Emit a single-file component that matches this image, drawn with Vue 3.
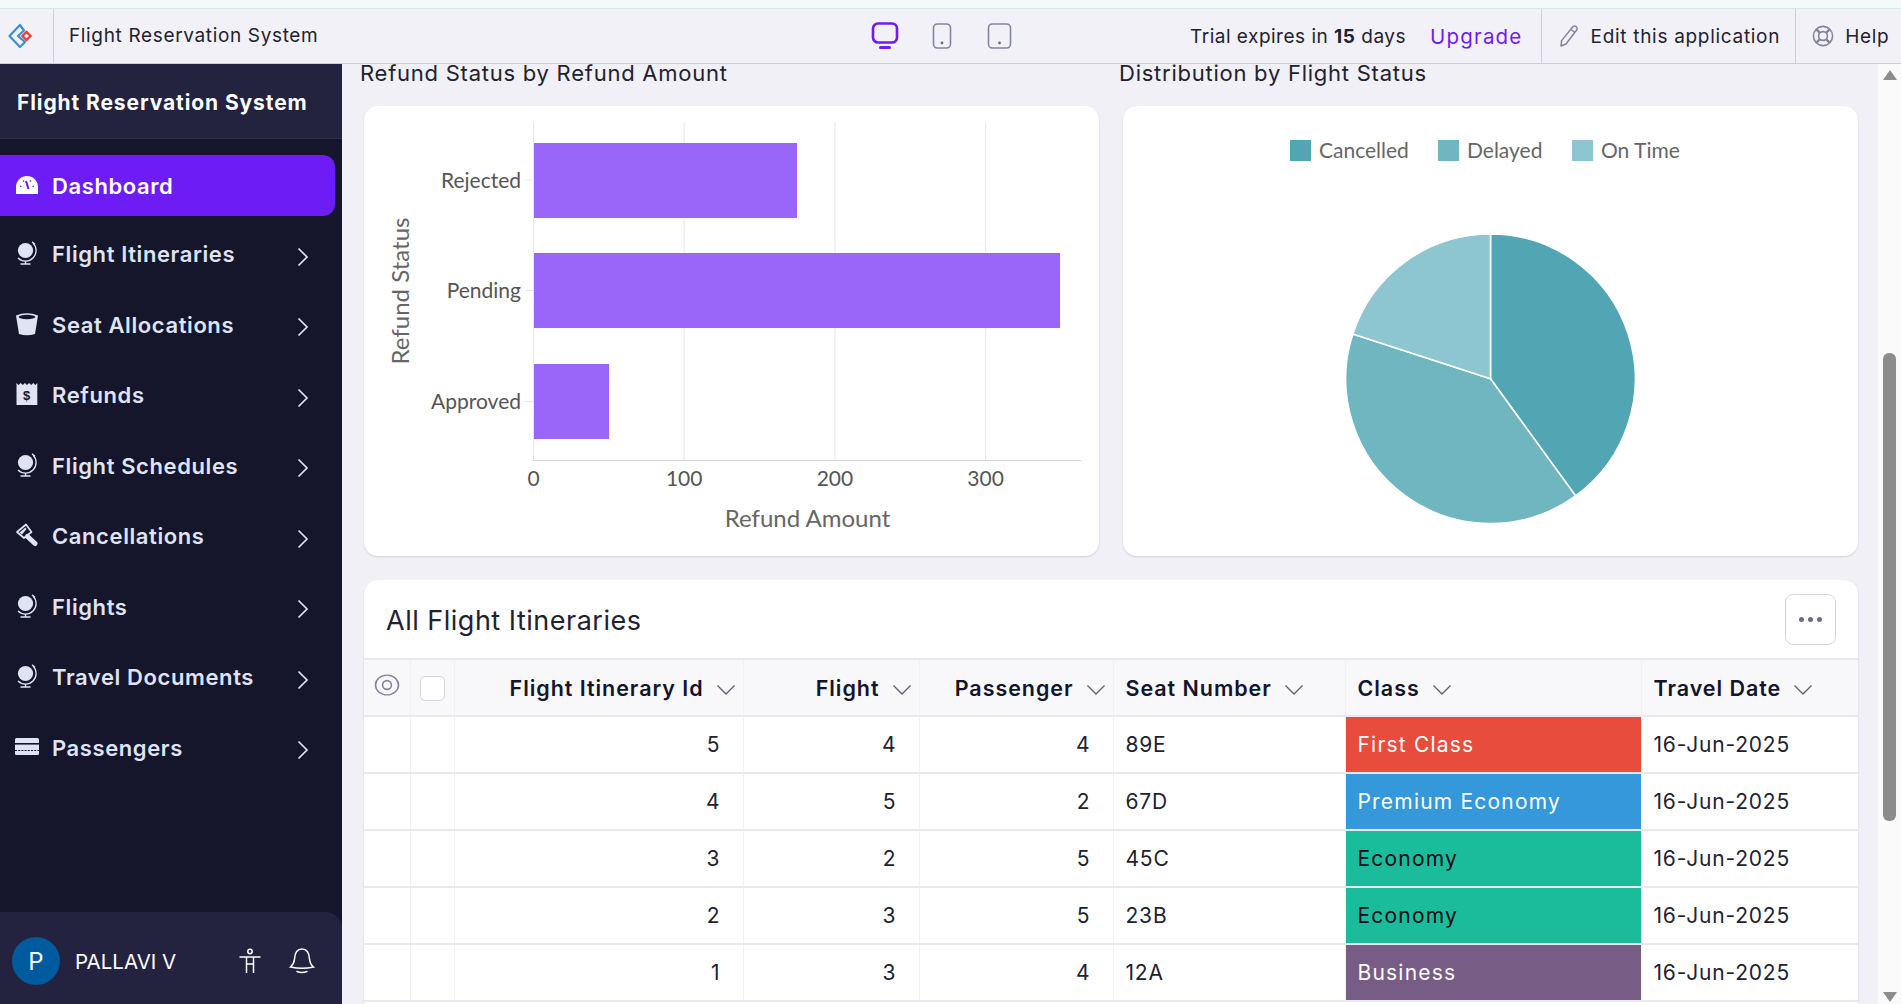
<template>
  <div class="page">
    <div class="strip"></div>

    <header class="topbar">
      <div class="logo">
        <svg width="30" height="30" viewBox="0 0 30 30">
          <path d="M17 4 L6.5 15 L17 26 L22 21 L15 15 L21 9.5 Z" fill="none" stroke="#3d8ed0" stroke-width="2.2" stroke-linejoin="round" />
          <path d="M27.5 15 L23.5 19 L19.5 15 L23.5 11 Z" fill="none" stroke="#e8403c" stroke-width="2.4" />
        </svg>
      </div>
      <div class="app-name">Flight Reservation System</div>
      <div class="devices">
        <svg width="28" height="28" viewBox="0 0 28 28">
          <rect x="2" y="1.5" width="24" height="19" rx="5" fill="none" stroke="#6d1cf5" stroke-width="2.6" />
          <rect x="8" y="24" width="12" height="3" rx="1.5" fill="#6d1cf5" />
        </svg>
        <svg width="20" height="28" viewBox="0 0 20 28">
          <rect x="1.5" y="2" width="17" height="24" rx="4" fill="none" stroke="#84849f" stroke-width="1.6" />
          <circle cx="10" cy="21" r="1.4" fill="#6c6c88" />
        </svg>
        <svg class="device-last" width="25" height="28" viewBox="0 0 25 28">
          <rect x="1.5" y="2" width="22" height="24" rx="4" fill="none" stroke="#84849f" stroke-width="1.6" />
          <circle cx="12.5" cy="21" r="1.4" fill="#6c6c88" />
        </svg>
      </div>
      <div class="trial">Trial expires in <b>15</b> days</div>
      <a class="upgrade">Upgrade</a>
      <div class="top-action edit">
        <svg width="20" height="24" viewBox="0 0 20 24">
          <path d="M14 2.5 a2.6 2.6 0 0 1 4 3 L7 20 L2 22 L2.6 16.6 Z M12 5.5 L16 8.5" fill="none" stroke="#84849f" stroke-width="1.5" stroke-linejoin="round" />
        </svg>
        <span>Edit this application</span>
      </div>
      <div class="top-action help">
        <svg width="22" height="22" viewBox="0 0 22 22">
          <g fill="none" stroke="#84849f" stroke-width="1.6">
            <circle cx="11" cy="11" r="9.6" />
            <circle cx="11" cy="11" r="4.4" />
            <path d="M4.2 4.2 L7.9 7.9 M17.8 4.2 L14.1 7.9 M4.2 17.8 L7.9 14.1 M17.8 17.8 L14.1 14.1" stroke-width="2.4" />
          </g>
        </svg>
        <span>Help</span>
      </div>
    </header>

    <div class="body-row">
      <aside class="sidebar">
        <div class="side-title">Flight Reservation System</div>
        <nav class="nav">
          <div class="nav-active">
            <svg class="nav-icon" viewBox="0 0 24 24">
              <path d="M1 21 V14 A11 11 0 0 1 23 14 V21 Z" fill="#fff" />
              <path d="M11 8 L13.5 16" stroke="#6d1cf5" stroke-width="2" />
              <path d="M5 13 l1.5 .6 M8 7.5 l1 1 M16 7.5 l-1 1 M19 13 l-1.5 .6" stroke="#6d1cf5" stroke-width="1.2" />
            </svg>
            <span>Dashboard</span>
          </div>
          <div v-for="item in navItems" :key="item.label" class="nav-item">
            <svg class="nav-icon" viewBox="0 0 24 24">
              <template v-if="item.icon === 'globe'">
                <circle cx="10.5" cy="9.5" r="7.6" fill="#dfe3f3" />
                <path d="M18 2 A10.6 10.6 0 0 1 3 17 M17 .8 l3 2.4" fill="none" stroke="#dfe3f3" stroke-width="1.3" />
                <path d="M10.5 20 V22.5 M5.5 23 H15.5" stroke="#dfe3f3" stroke-width="1.4" />
              </template>
              <template v-else-if="item.icon === 'bucket'">
                <path d="M1 3.5 Q12 -1 23 3.5 L20 22 Q12 24.5 4 22 Z" fill="#dfe3f3" />
                <ellipse cx="12" cy="5" rx="8.4" ry="2.2" fill="#15162b" />
              </template>
              <template v-else-if="item.icon === 'receipt'">
                <path d="M1.5 1 l2.1 2 l2.1 -2 l2.1 2 l2.1 -2 l2.1 2 l2.1 -2 l2.1 2 l2.1 -2 l2.1 2 l1.9 -2 V23 H1.5 Z" fill="#dfe3f3" />
                <text x="12" y="18" text-anchor="middle" class="dollar">$</text>
              </template>
              <template v-else-if="item.icon === 'hammer'">
                <path d="M12.5 13.5 L20 20.5" stroke="#dfe3f3" stroke-width="5" stroke-linecap="round" />
                <path d="M2 9 L11 1.5 L16.5 9 L9 15 Z" fill="none" stroke="#dfe3f3" stroke-width="1.7" stroke-linejoin="round" />
                <path d="M4.5 9.5 L10.5 4.5 L11.5 6 L7 11.5 Z" fill="#dfe3f3" />
              </template>
              <template v-else>
                <rect x="0" y="3" width="24" height="17" rx="1.5" fill="#dfe3f3" />
                <rect x="0" y="8" width="24" height="1.6" fill="#15162b" />
                <path d="M0 15.5 H24" stroke="#15162b" stroke-width="1.2" stroke-dasharray="2 1.2" />
              </template>
            </svg>
            <span class="nav-label">{{ item.label }}</span>
            <svg class="nav-chevron" width="12" height="20" viewBox="0 0 12 20">
              <path d="M1.5 1.5 L10 10 L1.5 18.5" fill="none" stroke="#dfe3f3" stroke-width="1.7" />
            </svg>
          </div>
        </nav>
        <div class="user">
          <div class="avatar">P</div>
          <div class="user-name">PALLAVI V</div>
          <svg class="person" width="24" height="26" viewBox="0 0 24 26">
            <g fill="none" stroke="#fff" stroke-width="1.5">
              <circle cx="12" cy="3.5" r="2.2" />
              <path d="M1.5 9 H22.5 M8.5 9 V25 M15.5 9 V25 M8.5 16 H15.5" />
            </g>
          </svg>
          <svg width="26" height="26" viewBox="0 0 26 26">
            <g fill="none" stroke="#fff" stroke-width="1.5" stroke-linecap="round">
              <path d="M1.5 19 Q5 16 5.5 11 C6 3 9 1 13 1 C17 1 20 3 20.5 11 Q21 16 24.5 19 Q13 21.5 1.5 19 Z" />
              <path d="M8 23.5 Q13 25.5 18 23.5" />
            </g>
          </svg>
        </div>
      </aside>

      <main class="main">
        <div class="charts">
          <section class="chart-block">
            <h2>Refund Status by Refund Amount</h2>
            <div class="card">
              <svg class="chart" viewBox="364 106 736 450">
                <g stroke="#e6e6e6" stroke-width="1">
                  <line v-for="t in barTicks" :key="t.label" :x1="t.x" :x2="t.x" y1="122" y2="461" />
                  <line x1="525" x2="533" y1="180" y2="180" />
                  <line x1="525" x2="533" y1="290.5" y2="290.5" />
                  <line x1="525" x2="533" y1="401.5" y2="401.5" />
                </g>
                <rect v-for="b in bars" :key="b.label" x="534" :y="b.y" :width="b.value * 1.503" height="75" fill="#9966f9" />
                <line x1="533" x2="1081" y1="460.5" y2="460.5" stroke="#d8d8d8" />
                <text v-for="b in bars" :key="b.label" x="521" :y="b.y + 45" text-anchor="end" class="chart-text">{{ b.label }}</text>
                <text v-for="t in barTicks" :key="t.label" :x="t.x" y="486" text-anchor="middle" class="chart-text">{{ t.label }}</text>
                <text x="807.5" y="527" text-anchor="middle" class="chart-title">Refund Amount</text>
                <text x="409" y="291" text-anchor="middle" transform="rotate(-90 409 291)" class="chart-title">Refund Status</text>
              </svg>
            </div>
          </section>
          <section class="chart-block">
            <h2>Distribution by Flight Status</h2>
            <div class="card">
              <svg class="chart" viewBox="1123 106 736 450">
                <g v-for="s in legend" :key="s.label">
                  <rect :x="s.x" y="140" width="21" height="21" :fill="s.color" />
                  <text :x="s.x + 29" y="158" class="legend-text">{{ s.label }}</text>
                </g>
                <path v-for="s in slices" :key="s.color" :d="s.d" :fill="s.color" stroke="#fff" stroke-width="1.6" />
              </svg>
            </div>
          </section>
        </div>

        <section class="card table-card">
          <div class="table-head">
            <h3>All Flight Itineraries</h3>
            <button class="more"><i></i><i></i><i></i></button>
          </div>
          <table>
            <colgroup>
              <col v-for="w in colWidths" :key="w.key" :style="{ width: w.px + 'px' }" />
            </colgroup>
            <thead>
              <tr>
                <th class="center">
                  <svg width="26" height="26" viewBox="0 0 26 26">
                    <circle cx="13" cy="13" r="11.5" fill="none" stroke="#84849f" stroke-width="1.6" transform="matrix(1 0 0 .86 0 1.8)" />
                    <circle cx="13" cy="13" r="4.4" fill="none" stroke="#84849f" stroke-width="1.6" />
                  </svg>
                </th>
                <th class="center"><span class="checkbox"></span></th>
                <th v-for="c in columns" :key="c.label" :class="c.num ? 'num-head' : 'text-head'">
                  <span class="th-inner">
                    <span class="th-label">{{ c.label }}</span>
                    <svg width="20" height="12" viewBox="0 0 20 12">
                      <path d="M1.5 1.5 L10 10 L18.5 1.5" fill="none" stroke="#5f5f78" stroke-width="1.3" />
                    </svg>
                  </span>
                </th>
              </tr>
            </thead>
            <tbody>
              <tr v-for="r in rows" :key="r.id">
                <td></td>
                <td></td>
                <td class="num">{{ r.id }}</td>
                <td class="num">{{ r.flight }}</td>
                <td class="num">{{ r.passenger }}</td>
                <td class="text">{{ r.seat }}</td>
                <td class="text cls" :class="r.cls"><span>{{ r.label }}</span></td>
                <td class="text">{{ r.date }}</td>
              </tr>
            </tbody>
          </table>
        </section>
      </main>

      <div class="scrollbar">
        <div class="arrow-up"></div>
        <div class="thumb"></div>
        <div class="arrow-down"></div>
      </div>
    </div>
  </div>
</template>

<script setup>
const navItems = [
  { label: 'Flight Itineraries', icon: 'globe' },
  { label: 'Seat Allocations', icon: 'bucket' },
  { label: 'Refunds', icon: 'receipt' },
  { label: 'Flight Schedules', icon: 'globe' },
  { label: 'Cancellations', icon: 'hammer' },
  { label: 'Flights', icon: 'globe' },
  { label: 'Travel Documents', icon: 'globe' },
  { label: 'Passengers', icon: 'card' }
]

const bars = [
  { label: 'Rejected', value: 175, y: 143 },
  { label: 'Pending', value: 350, y: 253 },
  { label: 'Approved', value: 50, y: 364 }
]
const barTicks = [0, 100, 200, 300].map((v) => ({ label: String(v), x: 533.5 + v * 1.507 }))

const legend = [
  { label: 'Cancelled', x: 1290, color: '#52a5b2' },
  { label: 'Delayed', x: 1438, color: '#6fb6c0' },
  { label: 'On Time', x: 1572, color: '#8dc6d0' }
]

// pie slices, angles measured clockwise from the top
const cx = 1490.5
const cy = 378.7
const radius = 144.8
const point = (deg) => {
  const a = (deg * Math.PI) / 180
  return `${cx + radius * Math.sin(a)} ${cy - radius * Math.cos(a)}`
}
const slice = (from, to) => `M${cx} ${cy} L${point(from)} A${radius} ${radius} 0 ${to - from > 180 ? 1 : 0} 1 ${point(to)} Z`
const slices = [
  { d: slice(0, 144), color: '#52a5b2' },
  { d: slice(144, 288), color: '#6fb6c0' },
  { d: slice(288, 360), color: '#8dc6d0' }
]

const colWidths = [46, 44, 289, 176, 194, 232, 296, 217].map((px, key) => ({ px, key }))
const columns = [
  { label: 'Flight Itinerary Id', num: true },
  { label: 'Flight', num: true },
  { label: 'Passenger', num: true },
  { label: 'Seat Number' },
  { label: 'Class' },
  { label: 'Travel Date' }
]
const rows = [
  { id: 5, flight: 4, passenger: 4, seat: '89E', label: 'First Class', cls: 'c-first', date: '16-Jun-2025' },
  { id: 4, flight: 5, passenger: 2, seat: '67D', label: 'Premium Economy', cls: 'c-premium', date: '16-Jun-2025' },
  { id: 3, flight: 2, passenger: 5, seat: '45C', label: 'Economy', cls: 'c-economy', date: '16-Jun-2025' },
  { id: 2, flight: 3, passenger: 5, seat: '23B', label: 'Economy', cls: 'c-economy', date: '16-Jun-2025' },
  { id: 1, flight: 3, passenger: 4, seat: '12A', label: 'Business', cls: 'c-business', date: '16-Jun-2025' }
]
</script>

<style>
html,
body {
  margin: 0;
  height: 100%;
  overflow: hidden;
}
</style>

<style scoped>
.page {
  width: 1901px;
  height: 1004px;
  display: flex;
  flex-direction: column;
  overflow: hidden;
  background: #f0f0f6;
  color: #22222f;
  font-family: Inter, 'Noto Sans', sans-serif;
}

.strip {
  height: 8px;
  background: #f3fbfa;
  border-bottom: 1px solid #d5e8e6;
}

.topbar {
  position: relative;
  z-index: 1;
  height: 54px;
  display: flex;
  align-items: center;
  background: #f2f1f8;
  border-bottom: 1px solid #cdcddd;
  font-size: 19px;
  flex-shrink: 0;
  white-space: nowrap;
}

.logo {
  width: 54px;
  height: 100%;
  display: flex;
  align-items: center;
  padding-left: 3px;
  box-sizing: border-box;
  border-right: 1px solid #cdcddd;
}

.app-name {
  width: 817px;
  padding: 0 0 2px 15px;
  box-sizing: border-box;
  letter-spacing: 0.65px;
}

.devices {
  display: flex;
  align-items: center;
  gap: 33px;
}

.device-last {
  margin-left: 2px;
}

.trial {
  margin-left: 178px;
  letter-spacing: 0.5px;
}

.trial b {
  font-weight: 700;
}

.upgrade {
  margin-left: 24px;
  color: #6d1cf5;
  font-size: 20.5px;
  letter-spacing: 1.2px;
}

.top-action {
  height: 100%;
  display: flex;
  align-items: center;
  gap: 12px;
  box-sizing: border-box;
  border-left: 1px solid #cdcddd;
  letter-spacing: 0.7px;
}

.edit {
  margin-left: 18px;
  padding: 0 15px 0 17px;
}

.help {
  padding-left: 16px;
  gap: 11px;
}

.body-row {
  flex: 1;
  display: flex;
  min-height: 0;
}

.sidebar {
  width: 342px;
  flex-shrink: 0;
  display: flex;
  flex-direction: column;
  background: #15162b;
  color: #dfe3f3;
}

.side-title {
  height: 75px;
  display: flex;
  align-items: center;
  padding: 2px 0 0 17px;
  box-sizing: border-box;
  background: #23233f;
  border-bottom: 1px solid #2e2e48;
  color: #fff;
  font-size: 21px;
  font-weight: 700;
  letter-spacing: 0.9px;
  white-space: nowrap;
}

.nav {
  flex: 1;
  padding: 16px 0 0;
}

.nav-active {
  width: 335px;
  height: 61px;
  display: flex;
  align-items: center;
  gap: 13px;
  margin-bottom: 3px;
  padding-left: 15px;
  box-sizing: border-box;
  background: #6d1cf5;
  border-radius: 0 12px 12px 0;
  color: #fff;
  font-size: 22px;
  font-weight: 600;
  letter-spacing: 0.6px;
}

.nav-item {
  height: 70.5px;
  display: flex;
  align-items: center;
  gap: 13px;
  padding-left: 15px;
  font-size: 22px;
  font-weight: 600;
  letter-spacing: 0.6px;
}

.nav-icon {
  width: 24px;
  height: 24px;
  margin-top: -2px;
  flex-shrink: 0;
}

.nav-label {
  flex: 1;
}

.nav-chevron {
  margin: 5px 33px 0 0;
}

.dollar {
  font-family: 'Liberation Sans', sans-serif;
  font-size: 13px;
  font-weight: 700;
  fill: #15162b;
}

.user {
  height: 92px;
  display: flex;
  align-items: center;
  padding: 6px 27px 0 12px;
  box-sizing: border-box;
  background: #23233f;
  border-top-right-radius: 16px;
  color: #fff;
}

.avatar {
  width: 48px;
  height: 48px;
  display: flex;
  align-items: center;
  justify-content: center;
  margin-right: 15px;
  border-radius: 50%;
  background: #005a9e;
  font-size: 24px;
}

.user-name {
  flex: 1;
  font-size: 20.5px;
}

.person {
  margin-right: 27px;
}

.main {
  flex: 1;
  min-width: 0;
  padding: 0 20px 0 18px;
}

.charts {
  display: grid;
  grid-template-columns: 759px 759px;
}

.chart-block h2 {
  height: 18px;
  margin: 0 0 24px;
  font-size: 22px;
  font-weight: 400;
  line-height: 18px;
  letter-spacing: 0.75px;
  white-space: nowrap;
}

.card {
  margin-left: 4px;
  background: #fff;
  border-radius: 14px;
  box-shadow: 0 1px 2px rgba(60, 60, 90, 0.18);
}

.chart-block .card {
  width: 735px;
  height: 450px;
}

.chart {
  display: block;
  width: 736px;
  height: 450px;
}

.chart-text {
  font-family: Lato, sans-serif;
  font-size: 21px;
  fill: #555;
}

.chart-title {
  font-family: Lato, sans-serif;
  font-size: 24px;
  fill: #666;
}

.legend-text {
  font-family: Lato, sans-serif;
  font-size: 21px;
  fill: #666;
}

.table-card {
  margin-top: 24px;
  width: 1494px;
  padding-bottom: 30px;
  overflow: hidden;
}

.table-head {
  height: 78px;
  display: flex;
  align-items: center;
  justify-content: space-between;
  padding: 0 22px;
}

.table-head h3 {
  margin: 2px 0 0;
  font-size: 27px;
  font-weight: 400;
  letter-spacing: 0.5px;
}

.more {
  width: 51px;
  height: 51px;
  display: flex;
  align-items: center;
  justify-content: center;
  gap: 4px;
  padding: 0;
  background: #fff;
  border: 1px solid #d5d5e2;
  border-radius: 8px;
}

.more i {
  width: 5px;
  height: 5px;
  border-radius: 50%;
  background: #6c6c88;
}

table {
  width: 1494px;
  table-layout: fixed;
  border-collapse: collapse;
  font-size: 21px;
}

th,
td {
  height: 57px;
  padding: 0;
  box-sizing: border-box;
  border: 1px solid #f1f1f5;
  border-bottom: 2px solid #e8e8ef;
  border-left: none;
}

th {
  background: #f8f8fb;
  border-top: 2px solid #e8e8ef;
  font-weight: 600;
  font-size: 21.5px;
  color: #14142b;
}

.center {
  text-align: center;
}

.checkbox {
  display: inline-block;
  width: 25px;
  height: 25px;
  box-sizing: border-box;
  vertical-align: middle;
  background: #fff;
  border: 1px solid #d5d5e2;
  border-radius: 5px;
}

.th-inner {
  display: inline-flex;
  align-items: center;
  gap: 12px;
}

.th-label {
  letter-spacing: 0.95px;
  margin-top: -4px;
}

.num-head {
  text-align: right;
  padding-right: 7px;
}

.text-head {
  text-align: left;
  padding-left: 12px;
}

.num {
  text-align: right;
  padding-right: 23px;
}

.text {
  padding-left: 12px;
  letter-spacing: 0.8px;
}

.cls {
  letter-spacing: 1.2px;
}

.c-first {
  background: #e74c3c;
  color: #fff;
}

.c-premium {
  background: #3498db;
  color: #fff;
}

.c-economy {
  background: #1abc9c;
  color: #0a0a14;
}

.c-business {
  background: #775d85;
  color: #fff;
}

.scrollbar {
  position: relative;
  z-index: 1;
  width: 23px;
  flex-shrink: 0;
  display: flex;
  flex-direction: column;
  align-items: center;
  background: #fafafa;
}

.arrow-up {
  width: 0;
  height: 0;
  margin-top: 6px;
  border: 7px solid transparent;
  border-top: none;
  border-bottom: 10px solid #8c8c8c;
}

.thumb {
  width: 13px;
  height: 468px;
  margin-top: 273px;
  border-radius: 6px;
  background: #8c8c8c;
}

.arrow-down {
  width: 0;
  height: 0;
  margin-top: auto;
  margin-bottom: 2px;
  border: 7px solid transparent;
  border-bottom: none;
  border-top: 10px solid #8c8c8c;
}
</style>
